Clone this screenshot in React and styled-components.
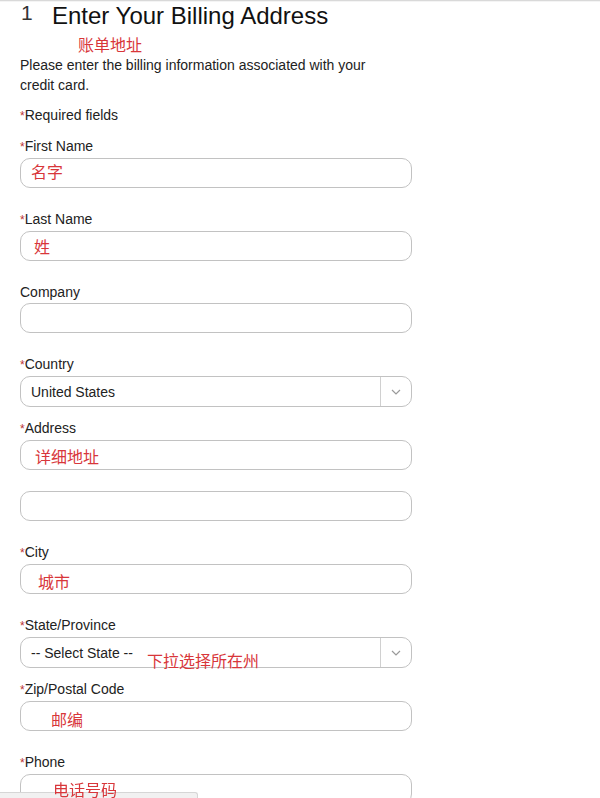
import React from "react";
import styled, { createGlobalStyle } from "styled-components";

const Global = createGlobalStyle`
  html, body { margin: 0; padding: 0; background: #fff; }
  body {
    font-family: "Liberation Sans", Arial, "Noto Sans CJK SC", sans-serif;
    color: #1d1d1f;
    overflow: hidden;
  }
`;

const TopRule = styled.div`
  height: 1px;
  background: #d9d9d9;
  border-bottom: 1px solid #f4f4f4;
`;

const Page = styled.div`
  padding: 0 0 0 20px;
  width: 392px;
`;

const Heading = styled.div`
  display: flex;
  align-items: flex-start;
  height: 32px;
`;

const StepNo = styled.span`
  font-size: 21px;
  line-height: 22px;
  margin-left: 1px;
  width: 31px;
  color: #333;
`;

const Title = styled.h1`
  margin: 0;
  font-size: 24px;
  font-weight: 400;
  line-height: 28px;
  color: #111;
`;

const Note = styled.div`
  font-family: "Noto Sans CJK SC", sans-serif;
  color: #d8363a;
  font-size: 16px;
  line-height: 21px;
  padding-left: ${(p) => p.$indent || 0}px;
`;

const Desc = styled.p`
  margin: 0 0 10px;
  font-size: 14px;
  line-height: 20px;
  color: #222;
  width: 370px;
`;

const Required = styled.div`
  font-size: 14px;
  line-height: 20px;
  margin-bottom: 10px;
  color: #222;
`;

const Star = styled.span`
  color: #b33;
  font-size: 12px;
`;

const Label = styled.div`
  font-size: 14px;
  line-height: 20px;
  margin-bottom: 1px;
  color: #222;
`;

const Field = styled.div`
  margin-bottom: ${(p) => p.$gap}px;
`;

const Box = styled.div`
  position: relative;
  box-sizing: border-box;
  height: ${(p) => p.$h || 30}px;
  border: 1px solid #c2c2c2;
  border-radius: 10px;
  display: flex;
  align-items: center;
  background: #fff;
`;

const Hint = styled.span`
  position: relative;
  z-index: 2;
  font-family: "Noto Sans CJK SC", sans-serif;
  color: #d8363a;
  font-size: 16px;
  line-height: 20px;
  padding-left: ${(p) => p.$indent}px;
  margin-top: ${(p) => p.$dy || 0}px;
`;

const SelectText = styled.span`
  flex: 1;
  font-size: 14px;
  color: #222;
  padding-left: 10px;
`;

const Caret = styled.div`
  width: 30px;
  height: 100%;
  border-left: 1px solid #d0d0d0;
  display: flex;
  align-items: center;
  justify-content: center;
`;

const FloatNote = styled.span`
  position: absolute;
  z-index: 2;
  left: 126px;
  top: 11px;
  font-family: "Noto Sans CJK SC", sans-serif;
  color: #d8363a;
  font-size: 16px;
  line-height: 22px;
`;

const StatusBar = styled.div`
  position: fixed;
  z-index: 1;
  left: 0;
  bottom: 0;
  width: 197px;
  height: 5px;
  background: #f1f1f1;
  border-top: 1px solid #d6d6d6;
  border-right: 1px solid #d6d6d6;
  border-top-right-radius: 3px;
`;

const Chevron = () => (
  <svg width="10" height="6" viewBox="0 0 10 6" fill="none">
    <path d="M1 1l4 4 4-4" stroke="#9a9a9a" strokeWidth="1.2" />
  </svg>
);

const LabelText = ({ req, children }) => (
  <Label>
    {req && <Star>*</Star>}
    {children}
  </Label>
);

const TextField = ({ label, req, hint, indent, dy, gap = 21 }) => (
  <Field $gap={gap}>
    {label && <LabelText req={req}>{label}</LabelText>}
    <Box>
      {hint && (
        <Hint $indent={indent} $dy={dy}>
          {hint}
        </Hint>
      )}
    </Box>
  </Field>
);

const SelectField = ({ label, value, note, gap = 11 }) => (
  <Field $gap={gap}>
    <LabelText req>{label}</LabelText>
    <Box $h={31}>
      <SelectText>{value}</SelectText>
      <Caret>
        <Chevron />
      </Caret>
      {note && <FloatNote>{note}</FloatNote>}
    </Box>
  </Field>
);

export default function App() {
  return (
    <>
      <Global />
      <TopRule />
      <Page>
        <Heading>
          <StepNo>1</StepNo>
          <Title>Enter Your Billing Address</Title>
        </Heading>
        <Note $indent={58}>账单地址</Note>
        <Desc>
          Please enter the billing information associated with your credit
          card.
        </Desc>
        <Required>
          <Star>*</Star>Required fields
        </Required>
        <TextField label="First Name" req hint="名字" indent={10} dy={-5} />
        <TextField label="Last Name" req hint="姓" indent={13} />
        <TextField label="Company" />
        <SelectField label="Country" value="United States" />
        <TextField label="Address" req hint="详细地址" indent={14} dy={2} />
        <TextField />
        <TextField label="City" req hint="城市" indent={17} dy={3} />
        <SelectField label="State/Province" value="-- Select State --" note="下拉选择所在州" />
        <TextField label="Zip/Postal Code" req hint="邮编" indent={30} dy={5} />
        <TextField label="Phone" req hint="电话号码" indent={32} dy={0} />
      </Page>
      <StatusBar />
    </>
  );
}
